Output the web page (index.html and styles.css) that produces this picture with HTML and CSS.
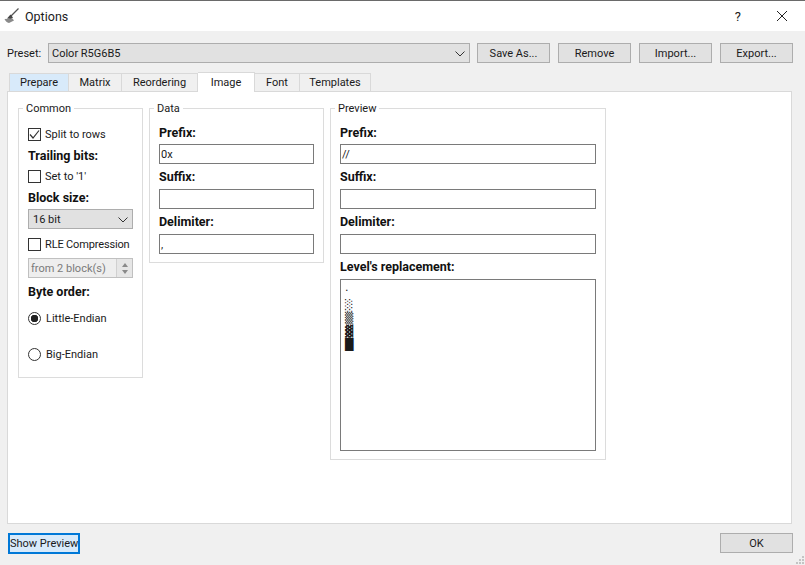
FILE: index.html
```html
<!DOCTYPE html>
<html lang="en">
<head>
    <meta charset="UTF-8">
    <meta name="viewport" content="width=device-width, initial-scale=1.0">
    <title>Options</title>
    <link rel="stylesheet" href="styles.css">
</head>
<body>

    <div class="window">
        <div class="titlebar">
            <svg class="app-icon" width="16" height="16" viewBox="0 0 16 16">
                <path d="M14.5 0.5 L7 8" stroke="#555" stroke-width="1.2" fill="none"/>
                <path d="M6.5 6.5 L9 9.5 L7 11 L3 10.5 Z" fill="#444"/>
                <path d="M0.5 11 L8.5 10.5 L10 12.5 L5 15 Q2 14.5 0.5 11 Z" fill="#8a8a8a"/>
            </svg>
            <span class="title">Options</span>
            <span class="help">?</span>
            <svg class="close" width="12" height="12" viewBox="0 0 12 12">
                <path d="M1 1 L11 11 M11 1 L1 11" stroke="#222" stroke-width="1" fill="none"/>
            </svg>
        </div>

        <div class="content">
            <div class="preset-row">
                <span class="preset-label">Preset:</span>
                <div class="combo preset-combo">
                    <span>Color R5G6B5</span>
                    <svg class="arrow" width="10" height="6" viewBox="0 0 10 6"><path d="M0.5 0.5 L5 5 L9.5 0.5" stroke="#333" fill="none"/></svg>
                </div>
                <button class="btn">Save As...</button>
                <button class="btn">Remove</button>
                <button class="btn">Import...</button>
                <button class="btn">Export...</button>
            </div>

            <div class="tabs">
                <div class="tab tab-hover tab-prepare">Prepare</div>
                <div class="tab tab-matrix">Matrix</div>
                <div class="tab tab-reordering">Reordering</div>
                <div class="tab tab-active">Image</div>
                <div class="tab tab-font">Font</div>
                <div class="tab tab-templates">Templates</div>
            </div>

            <div class="pane">
                <fieldset class="group group-common">
                    <legend>Common</legend>
                    <label class="check first-check"><span class="box checked"><svg width="11" height="11" viewBox="0 0 11 11"><path d="M1 5.5 L4 9 L10 1.5" stroke="#333" stroke-width="1.2" fill="none"/></svg></span>Split to rows</label>
                    <div class="caption cap-trailing">Trailing bits:</div>
                    <label class="check"><span class="box"></span>Set to '1'</label>
                    <div class="caption cap-block">Block size:</div>
                    <div class="combo block-combo">
                        <span>16 bit</span>
                        <svg class="arrow" width="10" height="6" viewBox="0 0 10 6"><path d="M0.5 0.5 L5 5 L9.5 0.5" stroke="#333" fill="none"/></svg>
                    </div>
                    <label class="check rle"><span class="box"></span>RLE Compression</label>
                    <div class="spin">
                        <span>from 2 block(s)</span>
                        <div class="spin-arrows"><i class="up"></i><i class="down"></i></div>
                    </div>
                    <div class="caption cap-order">Byte order:</div>
                    <label class="radio little"><span class="dot on"></span>Little-Endian</label>
                    <label class="radio big"><span class="dot"></span>Big-Endian</label>
                </fieldset>

                <fieldset class="group group-data">
                    <legend>Data</legend>
                    <div class="caption">Prefix:</div>
                    <div class="field">0x</div>
                    <div class="caption">Suffix:</div>
                    <div class="field"></div>
                    <div class="caption">Delimiter:</div>
                    <div class="field">,</div>
                </fieldset>

                <fieldset class="group group-preview">
                    <legend>Preview</legend>
                    <div class="caption">Prefix:</div>
                    <div class="field">//</div>
                    <div class="caption">Suffix:</div>
                    <div class="field"></div>
                    <div class="caption">Delimiter:</div>
                    <div class="field"></div>
                    <div class="caption">Level's replacement:</div>
                    <div class="levels">
                        <div>.</div>
                        <div>░</div>
                        <div>▒</div>
                        <div>▓</div>
                        <div>█</div>
                    </div>
                </fieldset>
            </div>

            <div class="bottom-row">
                <button class="btn btn-focus">Show Preview</button>
                <button class="btn btn-ok">OK</button>
            </div>
        </div>

        <svg class="grip" width="10" height="10" viewBox="0 0 10 10">
            <path d="M7 1h2v2h-2z M4 4h2v2h-2z M7 4h2v2h-2z M1 7h2v2h-2z M4 7h2v2h-2z M7 7h2v2h-2z" fill="#c4c4c4"/>
        </svg>
    </div>

</body>
</html>
```

FILE: styles.css
```css
* {
    box-sizing: border-box;
}
body {
    margin: 0;
    font-family: Roboto, "Liberation Sans", Arial, sans-serif;
    font-size: 11px;
    color: #1a1a1a;
    background: #f0f0f0;
    overflow: hidden;
}
.window {
    width: 805px;
    height: 565px;
    border-top: 1px solid #6a6a6a;
    display: flex;
    flex-direction: column;
    position: relative;
}
.grip {
    position: absolute;
    right: 0;
    bottom: 0;
}
.titlebar {
    height: 30px;
    background: white;
    display: flex;
    align-items: center;
    padding: 0 17px 0 4px;
    flex-shrink: 0;
}
.title {
    margin-left: 5px;
    font-size: 12.5px;
}
.help {
    margin-left: auto;
    margin-right: 35px;
    font-size: 13px;
}
.content {
    flex: 1;
    padding: 12px 12px 0 7px;
    display: flex;
    flex-direction: column;
}
.preset-row {
    display: flex;
    align-items: center;
    height: 20px;
    margin-left: -1px;
}
.preset-label {
    width: 42px;
    flex-shrink: 0;
    padding-left: 1px;
}
.combo {
    height: 20px;
    background: #e1e1e1;
    border: 1px solid #adadad;
    display: flex;
    align-items: center;
    justify-content: space-between;
    padding: 1px 4px 0 4px;
}
.preset-combo {
    width: 422px;
    margin-right: 7px;
    flex-shrink: 0;
    padding-left: 3px;
}
.btn {
    width: 73px;
    height: 20px;
    padding: 0;
    margin-right: 8px;
    background: #e1e1e1;
    border: 1px solid #adadad;
    font: inherit;
    color: inherit;
    white-space: nowrap;
    flex-shrink: 0;
}
.btn:last-child {
    margin-right: 0;
}
.tabs {
    display: flex;
    align-items: flex-end;
    height: 21px;
    margin-top: 7px;
    padding-left: 2px;
}
.tab {
    height: 18px;
    background: #f0f0f0;
    border: 1px solid #d9d9d9;
    border-bottom: none;
    border-left: none;
    text-align: center;
    line-height: 18px;
}
.tab-prepare { width: 60px; border-left: 1px solid #d9d9d9; }
.tab-matrix { width: 53px; }
.tab-reordering { width: 76px; }
.tab-font { width: 45px; }
.tab-templates { width: 71px; }
.tab-hover {
    background: #d8eafa;
}
.tab-active {
    width: 57px;
    height: 20px;
    line-height: 19px;
    background: white;
    margin-bottom: -1px;
    position: relative;
}
.pane {
    width: 785px;
    height: 433px;
    background: white;
    border: 1px solid #d9d9d9;
    display: flex;
    align-items: flex-start;
    padding: 11px 0 0 10px;
    gap: 6px;
}
.group {
    margin: 0;
    padding: 0 9px;
    border: 1px solid #dcdcdc;
    min-width: 0;
    flex-shrink: 0;
}
.group legend {
    padding: 0 3px;
    margin-left: -5px;
    line-height: 11px;
}
.group-common {
    width: 125px;
    height: 275px;
}
.group-data {
    width: 175px;
    height: 160px;
}
.group-preview {
    width: 276px;
    height: 357px;
}
.caption {
    font-weight: bold;
    font-size: 12.5px;
    color: #111;
    height: 15px;
    line-height: 15px;
    white-space: nowrap;
}
.group-data .caption, .group-preview .caption {
    margin-top: 5px;
    margin-bottom: 5px;
}
.group-data .caption:first-of-type, .group-preview .caption:first-of-type {
    margin-top: 11px;
    margin-bottom: 4px;
}
.field {
    height: 20px;
    background: white;
    border: 1px solid #7a7a7a;
    padding-left: 1px;
    line-height: 20px;
}
.levels {
    height: 172px;
    border: 1px solid #7a7a7a;
    padding: 1px 0 0 4px;
    font-family: "DejaVu Sans", sans-serif;
    font-size: 11px;
    line-height: 13px;
}
.levels div:first-child {
    margin-bottom: 5px;
}
.check, .radio {
    display: flex;
    align-items: center;
    height: 14px;
    white-space: nowrap;
}
.first-check {
    margin-top: 13px;
}
.box {
    width: 13px;
    height: 13px;
    border: 1px solid #333;
    background: white;
    margin-right: 4px;
    display: flex;
    align-items: center;
    justify-content: center;
    flex-shrink: 0;
}
.group-common .caption {
    margin-top: 7px;
}
.cap-trailing + .check {
    margin-top: 6px;
}
.block-combo {
    margin-top: 4px;
    width: 105px;
}
.rle {
    margin-top: 8px;
    letter-spacing: -0.15px;
}
.spin {
    margin-top: 7px;
    width: 105px;
    height: 20px;
    background: #eeeeee;
    border: 1px solid #c0c0c0;
    color: #7a7a7a;
    display: flex;
    align-items: center;
    justify-content: space-between;
    padding-left: 2px;
}
.spin-arrows {
    width: 16px;
    height: 18px;
    background: #e6e6e6;
    border-left: 1px solid #d0d0d0;
    display: flex;
    flex-direction: column;
    align-items: center;
    justify-content: center;
    gap: 3px;
}
.spin-arrows i {
    border-left: 3px solid transparent;
    border-right: 3px solid transparent;
}
.spin-arrows .up {
    border-bottom: 4px solid #8a8a8a;
}
.spin-arrows .down {
    border-top: 4px solid #8a8a8a;
}
.group-common .cap-order {
    margin-top: 6px;
}
.little {
    margin-top: 12px;
}
.big {
    margin-top: 22px;
}
.dot {
    width: 13px;
    height: 13px;
    border: 1px solid #333;
    border-radius: 50%;
    background: white;
    margin-right: 5px;
    flex-shrink: 0;
}
.dot.on {
    background: radial-gradient(circle, #222 0 3.5px, white 4px);
}
.bottom-row {
    display: flex;
    justify-content: space-between;
    margin-top: 9px;
    padding-left: 1px;
}
.btn-focus {
    width: 72px;
    height: 21px;
    background: #d8eafa;
    border: 2px solid #0078d7;
}
.btn-ok {
    width: 73px;
    margin-right: 0;
}
```
